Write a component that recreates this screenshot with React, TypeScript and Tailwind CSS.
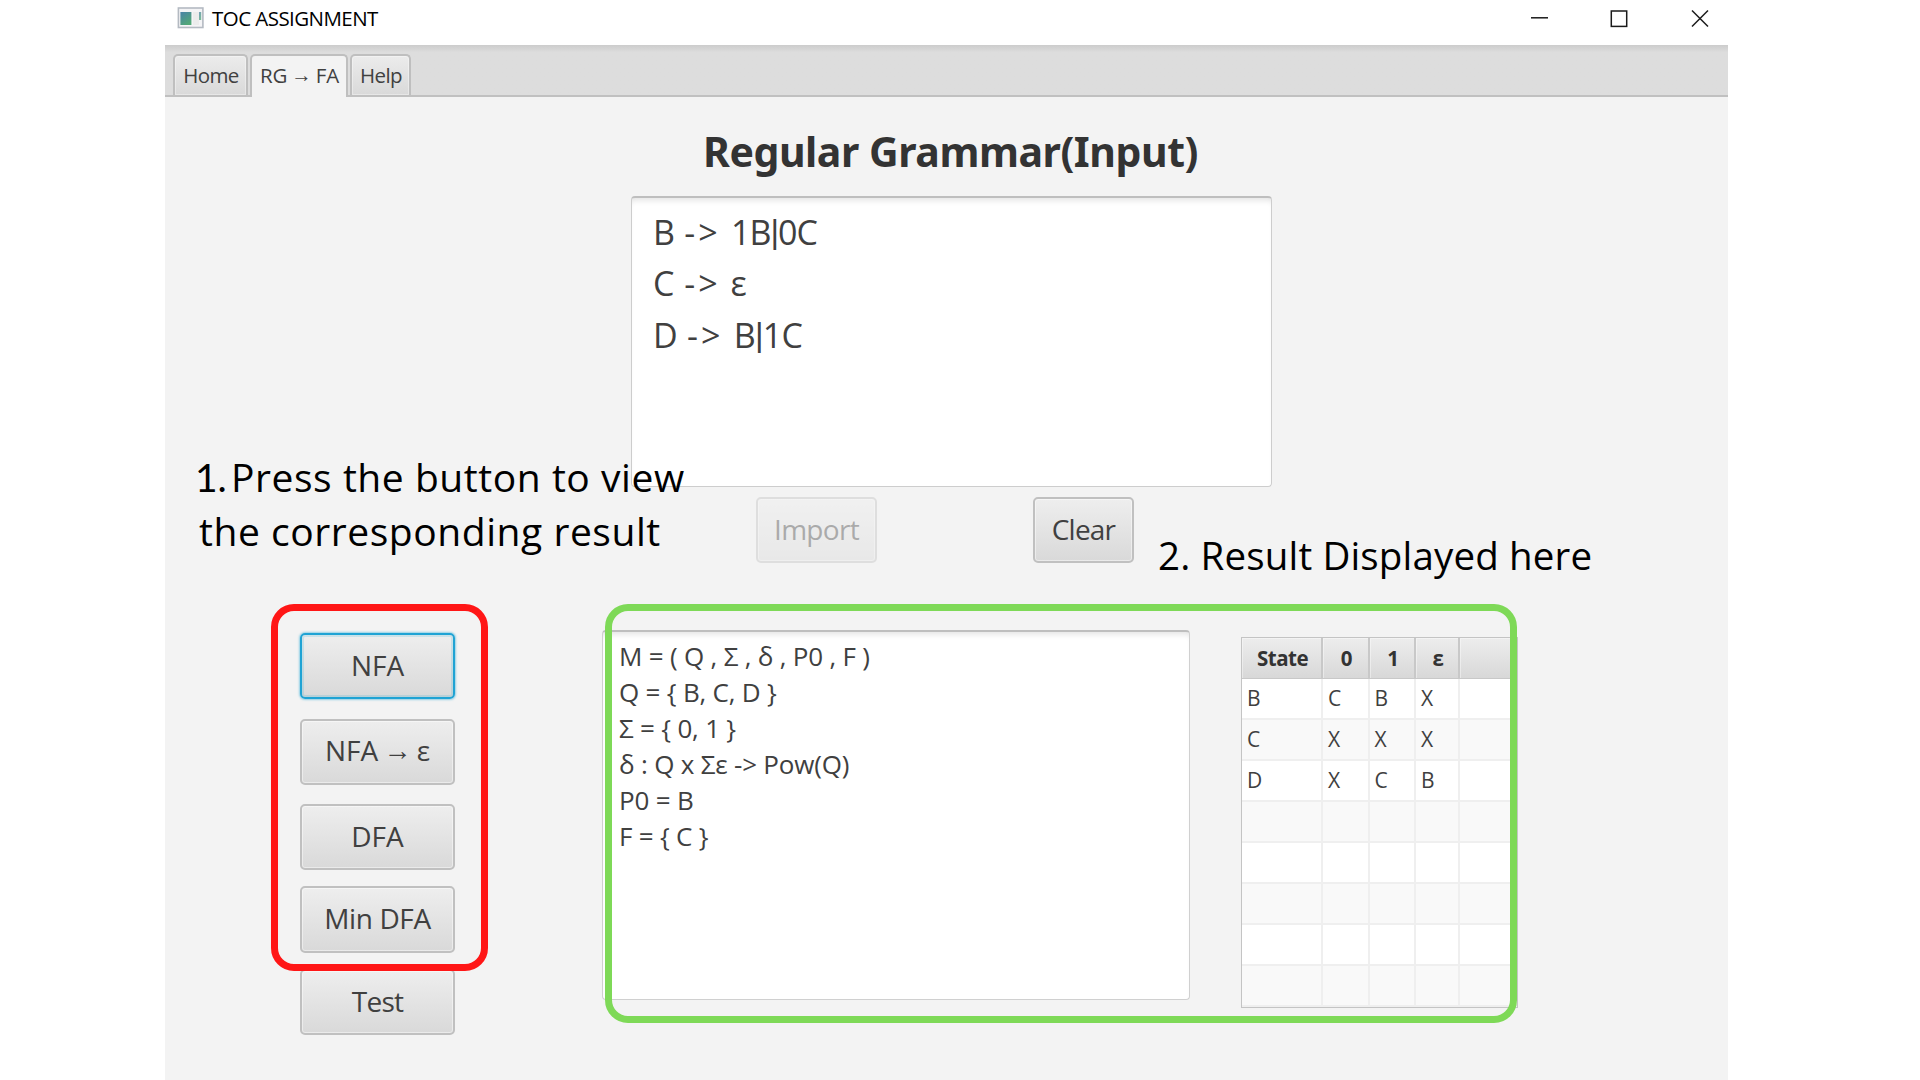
import type { ReactNode } from "react";

const UI = "font-['Open_Sans','Noto_Sans','DejaVu_Sans',sans-serif]";

function Arrow() {
  return <span className="relative -top-px font-['Noto_Sans',sans-serif] font-light leading-none">→</span>;
}

function Bar() {
  return <span className="relative -top-[2px] font-['Liberation_Sans',sans-serif] text-[33px] leading-none">|</span>;
}

function Produces() {
  return <span className="tracking-[3px]">-&gt;</span>;
}

function Tab({ active, className, children }: { active?: boolean; className: string; children: ReactNode }) {
  return (
    <div
      className={`flex items-center justify-center whitespace-pre rounded-t-[5px] border-2 border-b-0 border-[#bfbfbf] pl-px text-[20.5px] text-[#404040] ${className} ${
        active
          ? "h-[43px] bg-[#f3f3f3] pb-[3px] tracking-[-0.2px] [word-spacing:-1px]"
          : "h-[41px] bg-linear-to-b from-[#ececec] to-[#d9d9d9] tracking-[-0.6px] shadow-[inset_0_0_0_1px_rgba(255,255,255,0.35)]"
      }`}
    >
      {children}
    </div>
  );
}

function Button({ className = "", focused, children }: { className?: string; focused?: boolean; children: ReactNode }) {
  return (
    <button
      className={`flex shrink-0 items-center justify-center whitespace-pre rounded-[5px] border-2 bg-linear-to-b from-[#eeeeee] to-[#d9d9d9] pb-[3px] text-[28px] leading-none text-[#404040] ${
        focused
          ? "border-[#1fa3d4] shadow-[0_0_2px_1px_rgba(3,158,211,0.4),inset_0_0_0_2px_rgba(3,158,211,0.15)]"
          : "border-[#c0c0c0] shadow-[inset_0_0_0_1px_rgba(255,255,255,0.45)]"
      } ${className}`}
    >
      {children}
    </button>
  );
}

const columns = ["State", "0", "1", "ε", ""];
const rows = [
  ["B", "C", "B", "X", ""],
  ["C", "X", "X", "X", ""],
  ["D", "X", "C", "B", ""],
  ["", "", "", "", ""],
  ["", "", "", "", ""],
  ["", "", "", "", ""],
  ["", "", "", "", ""],
  ["", "", "", "", ""],
];
const grid = "grid grid-cols-[81px_46.5px_46.5px_44px_1fr]";

const result = [
  "M = ( Q , Σ , δ , P0 , F )",
  "Q = { B, C, D }",
  "Σ = { 0, 1 }",
  "δ : Q x Σε -> Pow(Q)",
  "P0 = B",
  "F = { C }",
];

function TitleBar() {
  return (
    <div className="flex h-[45px] items-start bg-white">
      <svg className="ml-[12px] mt-[7px]" width="27" height="22" viewBox="0 0 27 22">
        <defs>
          <linearGradient id="pane" x1="0" y1="0" x2="0.6" y2="1">
            <stop offset="0" stopColor="#4a82a8" />
            <stop offset="1" stopColor="#52a877" />
          </linearGradient>
        </defs>
        <rect x="1.400" y="1" width="24.5" height="19.5" fill="#f4f4f6" stroke="#b4bac2" strokeWidth="1.6" />
        <rect x="3.400" y="5" width="11" height="13" fill="url(#pane)" />
        <rect x="16" y="5" width="6" height="13" fill="#ececec" />
        <rect x="22" y="5" width="2.2" height="8" fill="url(#pane)" opacity="0.75" />
      </svg>
      <span className="ml-[8px] mt-[3px] text-[20.5px] leading-[30px] tracking-[-0.55px] text-black">TOC ASSIGNMENT</span>
      <svg className="ml-auto mr-[18px] mt-[8px]" width="181" height="22" viewBox="0 0 181 22" fill="none" stroke="#1a1a1a" strokeWidth="1.5">
        <path d="M2 9.8h17" />
        <rect x="82.3" y="3" width="15.4" height="15.4" />
        <path d="M163 2.500l16 16M179 2.500l-16 16" />
      </svg>
    </div>
  );
}

export default function App() {
  return (
    <div className={`relative h-[1080px] w-[1920px] overflow-hidden bg-white ${UI}`}>
      <div className="ml-[165px] flex h-[1080px] w-[1563px] flex-col bg-[#f3f3f3]">
        <TitleBar />
        <div className="flex h-[52px] shrink-0 items-start border-b-2 border-[#c0c0c0] bg-[#dddddd] bg-linear-to-b from-[#cccccc] to-[#dddddd] to-15% pl-[8px] pt-[9px]">
          <Tab className="w-[75px]">Home</Tab>
          <Tab active className="ml-[2px] w-[98px]">
            RG <Arrow /> FA
          </Tab>
          <Tab className="ml-[2px] w-[61px]">Help</Tab>
        </div>

        <h1 className="ml-[538px] mt-[24px] h-[60px] whitespace-pre font-['Noto_Sans',sans-serif] text-[41px] font-bold leading-[60px] tracking-[-0.46px] text-[#333333]">
          Regular Grammar(Input)
        </h1>

        <div className="ml-[466px] mt-[15px] h-[291px] w-[641px] shrink-0 rounded-[4px] border border-[#cdcdcd] border-t-2 border-t-[#bebebe] bg-white pl-[21px] pt-[9px] text-[34px] leading-[51.3px] text-[#404040] shadow-[inset_0_6px_6px_-4px_rgba(0,0,0,0.12)] [word-spacing:1px]">
          <p className="h-[51.3px] tracking-[-1px] [word-spacing:2.500px]">B <Produces /> 1B<Bar />0C</p>
          <p className="h-[51.3px]">C <Produces /> ε</p>
          <p className="h-[51.3px] tracking-[-0.7px] [word-spacing:2px]">D <Produces /> B<Bar />1C</p>
        </div>

        <div className="ml-[591px] mt-[10px] flex h-[66px] shrink-0 justify-between pr-[594px]">
          <Button className="h-[66px] w-[121px] tracking-[-0.7px] opacity-40">Import</Button>
          <Button className="h-[66px] w-[101px] tracking-[-0.8px]">Clear</Button>
        </div>

        <div className="mt-[67px] flex items-start">
          <div className="ml-[135px] mt-[3px] flex w-[155px] flex-col">
            <Button focused className="h-[66px] w-[155px]">NFA</Button>
            <Button className="mt-[20px] h-[66px] w-[155px] pb-[4px] [word-spacing:-2px]">NFA <Arrow /> ε</Button>
            <Button className="mt-[19px] h-[66px] w-[155px]">DFA</Button>
            <Button className="mt-[16px] h-[67px] w-[155px] tracking-[-0.4px]">Min DFA</Button>
            <Button className="mt-[16px] h-[66px] w-[155px] tracking-[-0.8px]">Test</Button>
          </div>
          <div className="ml-[147px] h-[370px] w-[588px] rounded-[4px] border border-[#d0d0d0] border-t-2 border-t-[#bebebe] bg-white pl-[16px] pt-[7px] text-[26px] leading-[35.900px] tracking-[-0.2px] text-[#404040] shadow-[inset_0_6px_6px_-4px_rgba(0,0,0,0.12)]">
            {result.map((line) => (
              <p key={line} className="whitespace-pre">{line}</p>
            ))}
          </div>
          <div className="ml-[51px] mt-[7px] h-[371px] w-[277px] border border-[#c4c4c4] text-[#404040]">
            <div className={`${grid} h-[41px]`}>
              {columns.map((c, i) => (
                <div
                  key={i}
                  className="flex items-center justify-center border-b border-r-2 border-b-[#c8c8c8] border-r-[#c8c8c8] bg-linear-to-b from-[#ededed] to-[#d8d8d8] pl-[2px] text-[20.5px] font-bold tracking-[-0.5px] text-[#333333] shadow-[inset_1px_1px_0_rgba(255,255,255,0.4)] last:border-r-0"
                >
                  {c}
                </div>
              ))}
            </div>
            {rows.map((r, i) => (
              <div key={i} className={`${grid} h-[41px] odd:bg-[#f9f9f9] even:bg-white`}>
                {r.map((v, j) => (
                  <div key={j} className="flex items-center border-b-2 border-r-2 border-[#efefef] pl-[5px] text-[21px] leading-none last:border-r-0">
                    {v}
                  </div>
                ))}
              </div>
            ))}
          </div>
        </div>
      </div>

      <div className="absolute left-[271px] top-[604px] h-[367px] w-[217px] rounded-[23px] border-[7px] border-[#ff1616]" />
      <div className="absolute left-[605px] top-[604px] h-[419px] w-[912px] rounded-[23px] border-[7px] border-[#7ed957]" />

      <div className="absolute left-[195px] top-[450px] whitespace-pre text-[39px] leading-[54px] tracking-[0.55px] text-black">
        <p className="flex">
          <span className="w-[36px] font-['Lato',sans-serif] tracking-[0px]">1.</span>
          <span>Press the button to view</span>
        </p>
        <p className="pl-[4px]">the corresponding result</p>
      </div>
      <div className="absolute left-[1158px] top-[528px] whitespace-pre text-[38.500px] leading-[54px] tracking-[0.15px] text-black">
        2. Result Displayed here
      </div>
    </div>
  );
}
